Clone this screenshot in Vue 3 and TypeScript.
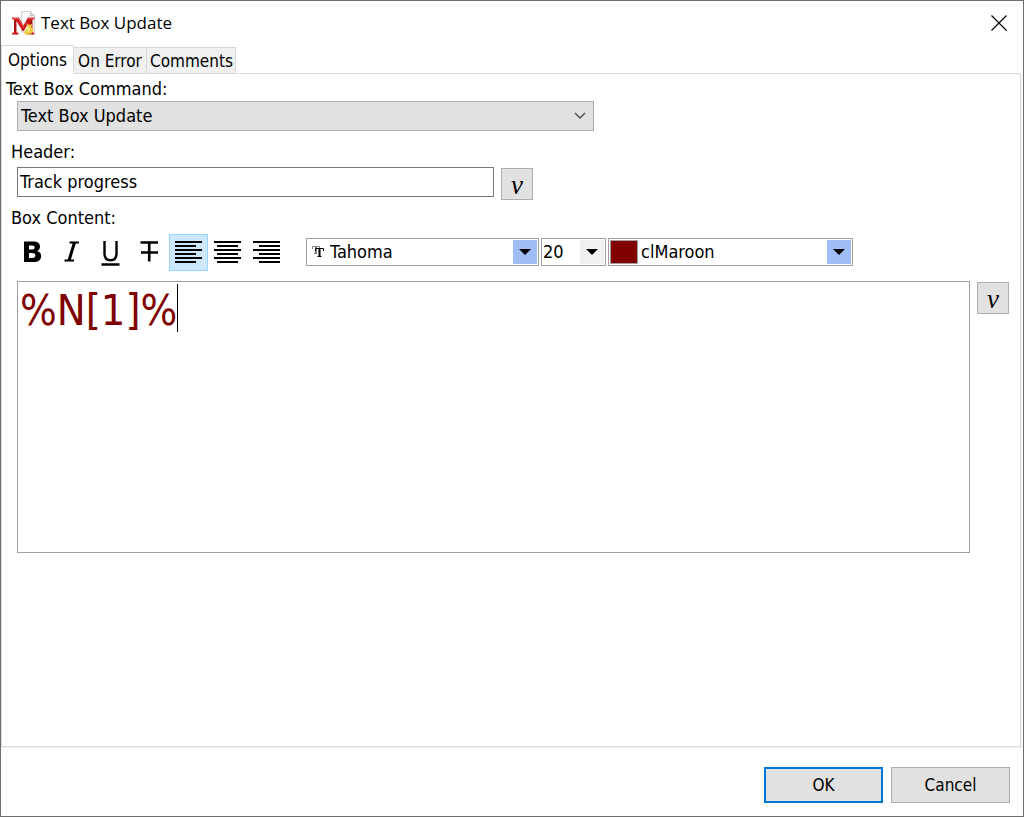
<script setup lang="ts">
import { ref } from 'vue'

type Align = 'left' | 'center' | 'right'

const tabs = ['Options', 'On Error', 'Comments']
const activeTab = ref('Options')
const command = ref('Text Box Update')
const header = ref('Track progress')
const content = ref('%N[1]%')
const font = ref('Tahoma')
const size = ref('20')
const color = ref('clMaroon')
const align = ref<Align>('left')

const aligns: { id: Align; label: string; path: string }[] = [
  { id: 'left', label: 'Align left', path: 'M0 1h27M0 5h21M0 9h27M0 13h21M0 17h27M0 21h21' },
  { id: 'center', label: 'Align center', path: 'M0 1h27M3 5h21M0 9h27M3 13h21M0 17h27M3 21h21' },
  { id: 'right', label: 'Align right', path: 'M0 1h27M6 5h21M0 9h27M6 13h21M0 17h27M6 21h21' },
]
</script>

<template>
  <main class="window">
    <header class="titlebar">
      <svg class="logo" width="26" height="28" viewBox="0 0 26 28" aria-hidden="true">
        <path d="M10.500 2.500h9l4 4V23h-13z" fill="#f8f8f8" stroke="#d2d2d2" />
        <path d="M19.500 2.500v4h4" fill="#dcdcdc" stroke="#c4c4c4" />
        <path d="M1 8.500h7l4.500 8L17 8.500h6.500V10l-2 .8v12.400l2 .8v1.500H15V24l2-.8v-8.700l-4.200 7.500h-1.300L5.500 12v11.200l2 .8v1.500H1V24l2-.8V10.800L1 10z" fill="#c9161a" />
        <path d="M2 9.500h5.500l5 9M17.500 9.500h5" fill="none" stroke="#f0665c" />
        <path d="M4 12v11M20.500 12v11" fill="none" stroke="#8f100e" />
        <path d="M15.500 14l2.500 2 3-1-.5 3 2 3-1.500 3-4 2-4-1.500 1-3 2.500-3z" fill="#efcb45" />
        <path d="M16 19l2 1-1 3" fill="none" stroke="#fbe98a" stroke-width="2" />
      </svg>
      <h1>Text Box Update</h1>
      <button class="close" type="button" aria-label="Close">
        <svg width="16" height="16" viewBox="0 0 16 16"><path d="M.5.500l15 15M15.500.500l-15 15" fill="none" stroke="#000" stroke-width="1.200" /></svg>
      </button>
    </header>

    <nav class="tabs" role="tablist">
      <button
        v-for="tab in tabs"
        :key="tab"
        type="button"
        role="tab"
        class="tab"
        :class="{ active: tab === activeTab }"
        :aria-selected="tab === activeTab"
        @click="activeTab = tab"
      >{{ tab }}</button>
    </nav>

    <section class="page">
      <label class="caption first" for="command">Text Box Command:</label>
      <div class="command">
        <select id="command" v-model="command">
          <option>Text Box Update</option>
        </select>
        <svg class="chevron" width="12" height="8" viewBox="0 0 12 8" aria-hidden="true"><path d="M1 1l5 5 5-5" fill="none" stroke="#444" stroke-width="1.300" /></svg>
      </div>

      <label class="caption" for="header">Header:</label>
      <div class="row">
        <input id="header" v-model="header" class="header-input" type="text" />
        <button class="variable" type="button" aria-label="Insert variable in header">v</button>
      </div>

      <label class="caption content-caption" for="content">Box Content:</label>
      <div class="toolbar">
        <button class="tool" type="button" aria-label="Bold">
          <svg width="39" height="37" viewBox="0 0 39 37"><path fill-rule="evenodd" d="M11 7.500h9c4.700 0 7 1.800 7 5.100 0 2.200-1 3.700-2.900 4.400 2.700.6 4 2.300 4 4.900 0 4-2.800 6.100-7.600 6.100H11zM16 11.500v4h2.700c2 0 2.900-.7 2.900-2.100s-.9-1.900-2.900-1.900zM16 19v5h3c2.200 0 3.400-.8 3.400-2.500S21.200 19 19 19z" /></svg>
        </button>
        <button class="tool" type="button" aria-label="Italic">
          <svg width="39" height="37" viewBox="0 0 39 37"><path d="M17.500 8.500H27M12.500 26.500H22" fill="none" stroke="#000" stroke-width="2.200" /><path d="M22.500 8.500l-5.500 18" fill="none" stroke="#000" stroke-width="3" /></svg>
        </button>
        <button class="tool" type="button" aria-label="Underline">
          <svg width="39" height="37" viewBox="0 0 39 37"><path d="M13.500 7v12.500c0 4.700 2 6.800 6 6.800s6-2.100 6-6.800V7M10.500 30.500h18" fill="none" stroke="#000" stroke-width="2.400" /></svg>
        </button>
        <button class="tool" type="button" aria-label="Strikethrough">
          <svg width="39" height="37" viewBox="0 0 39 37"><path d="M10.500 8.500h17.500M19.200 8.500V27.500M11 18.500h17" fill="none" stroke="#000" stroke-width="2.600" /></svg>
        </button>
        <button
          v-for="item in aligns"
          :key="item.id"
          class="tool"
          :class="{ pressed: item.id === align }"
          type="button"
          :aria-label="item.label"
          :aria-pressed="item.id === align"
          @click="align = item.id"
        >
          <svg width="27" height="24" viewBox="0 0 27 24"><path :d="item.path" stroke="#000" stroke-width="2" /></svg>
        </button>

        <div class="combo font">
          <svg class="glyph" width="12" height="12" viewBox="0 0 12 12" aria-hidden="true">
            <path d="M.5 3V.500H7.500V3M2 7.500h3" fill="none" stroke="#808080" />
            <path d="M3 1h2v6H3z" fill="#808080" />
            <path d="M3.500 5V2.500h8V5M5.500 10.500h4" fill="none" stroke="#000" />
            <path d="M6.500 3h2v8h-2z" />
          </svg>
          <select v-model="font" aria-label="Font"><option>Tahoma</option></select>
          <span class="drop blue"><svg width="12" height="6" viewBox="0 0 12 6"><path d="M0 0h12L6 6z" /></svg></span>
        </div>
        <div class="combo size">
          <select v-model="size" aria-label="Font size"><option>20</option></select>
          <span class="drop"><svg width="12" height="6" viewBox="0 0 12 6"><path d="M0 0h12L6 6z" /></svg></span>
        </div>
        <div class="combo color">
          <span class="swatch"></span>
          <select v-model="color" aria-label="Font color"><option>clMaroon</option></select>
          <span class="drop blue"><svg width="12" height="6" viewBox="0 0 12 6"><path d="M0 0h12L6 6z" /></svg></span>
        </div>
      </div>

      <div class="row editor-row">
        <div class="editor">
          <textarea id="content" v-model="content" spellcheck="false"></textarea>
          <span class="caret"></span>
        </div>
        <button class="variable" type="button" aria-label="Insert variable in content">v</button>
      </div>
    </section>

    <footer class="actions">
      <button class="action primary" type="button">OK</button>
      <button class="action" type="button">Cancel</button>
    </footer>
  </main>
</template>

<style>
body {
  margin: 0;
  background: #fff;
}
</style>

<style scoped>
.window {
  box-sizing: border-box;
  display: flex;
  flex-direction: column;
  min-height: 100vh;
  border: 1px solid #6e6e6e;
  background: #fff;
  color: #000;
  font: 18px/22px "DejaVu Sans Condensed", "DejaVu Sans", sans-serif;
}
.window * {
  box-sizing: border-box;
}
button,
input,
select,
textarea {
  margin: 0;
  padding: 0;
  border: 0;
  border-radius: 0;
  background: none;
  color: inherit;
  font: inherit;
}
svg {
  display: block;
}
.titlebar {
  display: flex;
  align-items: center;
  height: 44px;
  padding: 0 16px 0 10px;
}
h1 {
  flex: 1;
  margin: 0 0 0 4px;
  font: 17px/24px "Open Sans", sans-serif;
}
.tabs {
  display: flex;
  align-items: flex-end;
  height: 29px;
  margin-bottom: -1px;
}
.tab {
  position: relative;
  height: 27px;
  padding: 0 3px;
  border: 1px solid #d9d9d9;
  border-left: 0;
  background: #f0f0f0;
  font-size: 17px;
  line-height: 24px;
  white-space: nowrap;
}
.tab:nth-child(2) {
  width: 73px;
}
.tab:nth-child(3) {
  width: 89px;
}
.tab.active {
  width: 73px;
  height: 29px;
  border-left: 1px solid #d9d9d9;
  border-bottom-color: #fff;
  background: #fff;
}
.page {
  flex: 1;
  margin-right: 2px;
  padding: 4px 11px 0 15px;
  border: 1px solid #d9d9d9;
  box-shadow: 1px 1px 0 #f0f0f0;
}
.caption {
  display: block;
  width: max-content;
  margin: 10px 0 4px -6px;
}
.caption.first {
  margin: 0 0 1px -11px;
}
.command {
  position: relative;
  width: 577px;
  max-width: 100%;
}
.command select {
  display: block;
  width: 100%;
  height: 30px;
  padding-left: 3px;
  border: 1px solid #adadad;
  background: #e1e1e1;
  appearance: none;
}
.chevron {
  position: absolute;
  top: 11px;
  right: 8px;
  pointer-events: none;
}
.row {
  display: flex;
  align-items: flex-start;
  gap: 7px;
}
.header-input {
  width: 477px;
  height: 30px;
  padding: 0 2px 2px;
  border: 1px solid #7a7a7a;
}
.variable {
  width: 32px;
  height: 32px;
  margin-top: 1px;
  padding-top: 2px;
  border: 1px solid #adadad;
  background: #e1e1e1;
  font: italic 27px/28px "Liberation Serif", serif;
}
.content-caption {
  margin: 7px 0 5px -6px;
}
.toolbar {
  display: flex;
  align-items: flex-start;
  height: 37px;
  margin-left: -4px;
}
.tool {
  display: flex;
  flex: none;
  align-items: center;
  justify-content: center;
  width: 39px;
  height: 37px;
}
.tool.pressed {
  border: 1px solid #99d1ff;
  background: #cce8ff;
}
.combo {
  display: flex;
  align-items: center;
  height: 28px;
  margin: 4px 2px 0 0;
  padding: 1px;
  border: 1px solid #a0a0a0;
}
.combo select {
  flex: 1;
  min-width: 0;
  height: 24px;
  padding: 0;
  appearance: none;
}
.combo.font {
  width: 233px;
  margin-left: 20px;
}
.size {
  width: 65px;
}
.color {
  width: 245px;
}
.glyph {
  margin: 0 6px 0 4px;
}
.swatch {
  width: 28px;
  height: 24px;
  margin-right: 3px;
  border: 1px solid #a0a0a0;
  background: #800000;
}
.drop {
  display: flex;
  align-items: center;
  justify-content: center;
  width: 24px;
  height: 24px;
  background: #f0f0f0;
  pointer-events: none;
}
.drop.blue {
  background: #9fbef5;
}
.editor-row {
  margin-top: 10px;
}
.editor {
  position: relative;
  flex: 1;
}
textarea {
  display: block;
  width: 100%;
  height: 272px;
  padding: 3px 2px;
  border: 1px solid #a0a0a0;
  color: #800000;
  font-size: 43px;
  line-height: 50px;
  resize: none;
}
.caret {
  position: absolute;
  top: 3px;
  left: 160px;
  width: 1px;
  height: 48px;
  background: #000;
}
.actions {
  display: flex;
  justify-content: flex-end;
  gap: 8px;
  padding: 20px 13px 13px;
}
.action {
  width: 119px;
  height: 36px;
  border: 1px solid #adadad;
  background: #e1e1e1;
  font-size: 17px;
}
.action.primary {
  border: 2px solid #0078d7;
}
</style>
